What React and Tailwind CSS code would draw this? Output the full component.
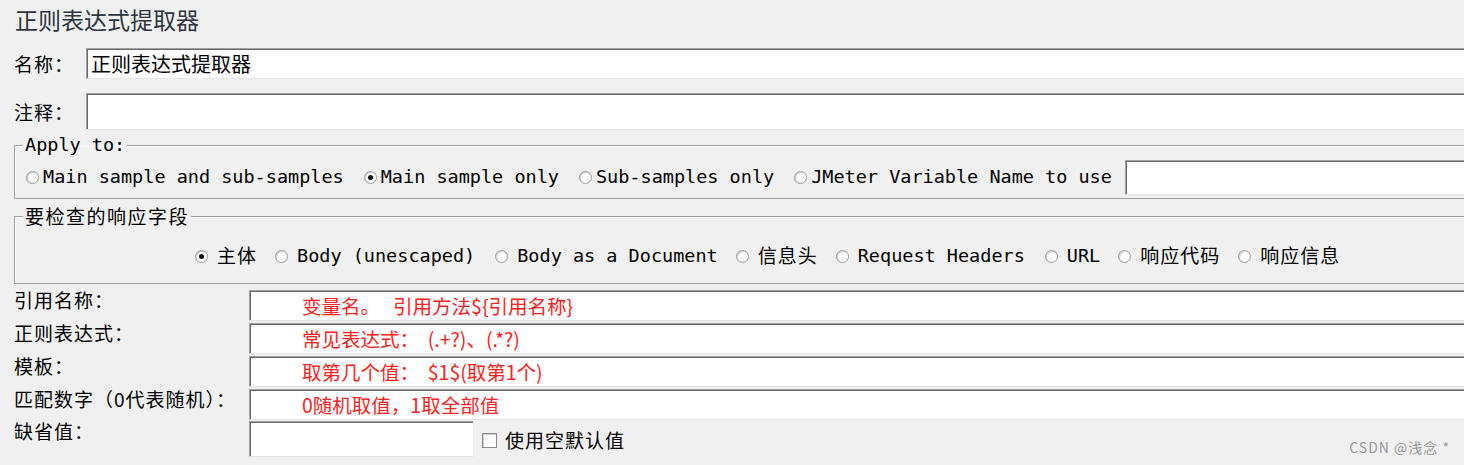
import React from 'react';

const cjk = { fontFamily: '"Noto Sans CJK SC", "Noto Sans", sans-serif' };
const mono = { fontFamily: '"DejaVu Sans Mono", "Noto Sans CJK SC", monospace' };

const inputCls =
  'bg-white border-t border-l border-[#a0a0a0] border-b border-b-[#e3e3e3] shadow-[inset_1px_1px_0_#696969]';

const Radio = ({ checked }) => (
  <span className="inline-flex items-center justify-center w-[13px] h-[13px] rounded-full border border-[#9a9a9a] bg-white shadow-[inset_1px_1px_1px_#cfcfcf] shrink-0">
    {checked && <span className="w-[5px] h-[5px] rounded-full bg-[#111]" />}
  </span>
);

const RadioItem = ({ checked, label, className = '', gap = 'ml-[7px]' }) => (
  <div className={`flex items-center ${className}`}>
    <Radio checked={checked} />
    <span className={`${gap} whitespace-nowrap`}>{label}</span>
  </div>
);

const Cn = ({ children }) => (
  <span className="text-[19px] tracking-[1px]" style={cjk}>{children}</span>
);

const FieldRow = ({ label, note, h }) => (
  <div className="flex items-start" style={{ height: h }}>
    <div className="w-[249px] pl-[14px] text-[19px] leading-[20px] tracking-[1px] text-black whitespace-nowrap" style={cjk}>
      {label}
    </div>
    <div className={`flex-1 -mr-[40px] h-[31px] flex items-center pl-[52px] ${inputCls}`}>
      {note && (
        <span className="text-[19.5px] leading-[22px] text-[#ff2222] whitespace-pre" style={cjk}>
          {note}
        </span>
      )}
    </div>
  </div>
);

const App = () => {
  return (
    <div className="relative w-[1464px] h-[465px] overflow-hidden bg-[#f0f0f0] text-black">
      {/* title */}
      <div className="h-[46px] pl-[15px] pt-[4px] text-[23px] leading-[30px] text-[#2d3540]" style={cjk}>
        正则表达式提取器
      </div>

      {/* 名称 */}
      <div className="flex items-center h-[31px] mt-[2px]">
        <div className="w-[86px] pl-[14px] text-[19px] leading-[20px] tracking-[1px]" style={cjk}>名称：</div>
        <div className={`flex-1 -mr-[40px] h-[31px] flex items-center pl-[4px] ${inputCls}`}>
          <span className="text-[20px] leading-[22px]" style={cjk}>正则表达式提取器</span>
        </div>
      </div>

      {/* 注释 */}
      <div className="flex items-center h-[37px] mt-[14px]">
        <div className="w-[86px] pl-[14px] text-[19px] leading-[20px] tracking-[1px]" style={cjk}>注释：</div>
        <div className={`flex-1 -mr-[40px] h-[37px] ${inputCls}`} />
      </div>

      {/* Apply to */}
      <fieldset className="ml-[14px] -mr-[40px] mt-[6px] border border-[#a0a0a0] shadow-[inset_1px_1px_0_#ffffff]">
        <legend className="ml-[8px] px-[2px] text-[18.5px] leading-[18px]" style={mono}>Apply to:</legend>
        <div className="flex items-center h-[32px] mt-[7px] mb-[5px] pl-[11px] text-[18.5px]" style={mono}>
          <RadioItem gap="ml-[4px]" label="Main sample and sub-samples" />
          <RadioItem gap="ml-[4px]" checked label="Main sample only" className="ml-[20px]" />
          <RadioItem gap="ml-[4px]" label="Sub-samples only" className="ml-[20px]" />
          <RadioItem gap="ml-[4px]" label="JMeter Variable Name to use" className="ml-[20px]" />
          <div className={`ml-[13px] flex-1 h-[35px] ${inputCls}`} />
        </div>
      </fieldset>

      {/* 要检查的响应字段 */}
      <fieldset className="ml-[14px] -mr-[40px] mt-[7px] border border-[#a0a0a0] shadow-[inset_1px_1px_0_#ffffff]">
        <legend className="ml-[8px] px-[2px] text-[19px] leading-[20px] tracking-[1.5px]" style={cjk}>要检查的响应字段</legend>
        <div className="flex items-center h-[30px] mt-[15px] mb-[12px] pl-[180px] text-[18.5px]" style={mono}>
          <RadioItem gap="ml-[9px]" checked label={<Cn>主体</Cn>} />
          <RadioItem gap="ml-[9px]" label="Body (unescaped)" className="ml-[18px]" />
          <RadioItem gap="ml-[9px]" label="Body as a Document" className="ml-[20px]" />
          <RadioItem gap="ml-[9px]" label={<Cn>信息头</Cn>} className="ml-[18px]" />
          <RadioItem gap="ml-[9px]" label="Request Headers" className="ml-[18px]" />
          <RadioItem gap="ml-[9px]" label="URL" className="ml-[20px]" />
          <RadioItem gap="ml-[9px]" label={<Cn>响应代码</Cn>} className="ml-[18px]" />
          <RadioItem gap="ml-[9px]" label={<Cn>响应信息</Cn>} className="ml-[18px]" />
        </div>
      </fieldset>

      {/* extractor fields */}
      <div className="mt-[6px] flex flex-col">
        <FieldRow label="引用名称：" note="变量名。   引用方法${引用名称}" h={33} />
        <FieldRow label="正则表达式：" note="常见表达式：  (.+?)、(.*?)" h={33} />
        <FieldRow label="模板：" note="取第几个值：  $1$(取第1个)" h={33} />
        <FieldRow label="匹配数字（0代表随机）：" note="0随机取值，1取全部值" h={32} />
        <div className="flex items-start h-[37px]">
          <div className="w-[249px] pl-[14px] text-[19px] leading-[20px] tracking-[1px]" style={cjk}>缺省值：</div>
          <div className={`w-[224px] h-[36px] ${inputCls}`} />
          <div className="flex items-center ml-[9px] mt-[9px]">
            <span className="w-[15px] h-[15px] bg-white border border-[#8a8a8a] shadow-[inset_1px_1px_0_#cfcfcf]" />
            <span className="ml-[8px] text-[19px] leading-[20px] tracking-[1px]" style={cjk}>使用空默认值</span>
          </div>
        </div>
      </div>

      {/* watermark */}
      <div className="absolute right-[14px] bottom-[7px] text-[14px] tracking-[1px] text-[#9a9a9a]" style={cjk}>
        CSDN @浅念 *
      </div>
    </div>
  );
};

export default App;
